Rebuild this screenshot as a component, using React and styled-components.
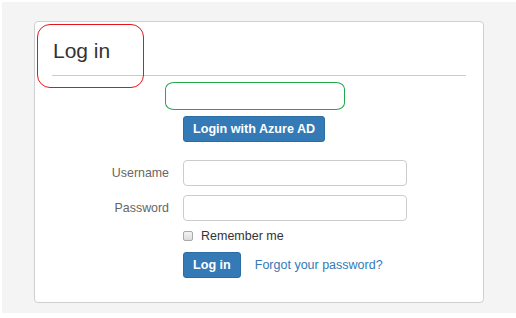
import React from "react";
import styled, { createGlobalStyle } from "styled-components";

const GlobalStyle = createGlobalStyle`
    body {
        margin: 0;
        background: #fff;
        font-family: "Liberation Sans", Arial, sans-serif;
        font-size: 12.5px;
        color: #333;
    }
    * { box-sizing: border-box; }
`;

const Screen = styled.section`
    margin: 2px 0 0 2px;
    height: 311px;
    background-color: #f4f4f4;
    padding: 19px 0 0 32px;
`;

const Card = styled.div`
    position: relative;
    width: 450px;
    height: 282px;
    background: #fff;
    border: 1px solid #cfcfcf;
    border-radius: 4px;
`;

const Header = styled.div`
    margin: 0 17px;
    padding: 17px 0 12px 1px;
    border-bottom: 1px solid #cccccc;
`;

const Title = styled.h2`
    margin: 0;
    font-weight: 400;
    font-size: 21px;
    line-height: 24px;
    color: #333;
`;

const Form = styled.div`
    display: flex;
    flex-direction: column;
`;

const Row = styled.div`
    display: grid;
    grid-template-columns: 134px 224px;
    column-gap: 14px;
    align-items: center;
    margin-top: ${(p) => p.$gap}px;
`;

const Label = styled.label`
    text-align: right;
    color: #666;
    font-size: 12.4px;
`;

const Input = styled.input`
    display: block;
    width: 224px;
    height: 26px;
    border: 1px solid #cccccc;
    border-radius: 4px;
    background: #fff;
    font: inherit;
`;

const Button = styled.button`
    justify-self: start;
    height: 26px;
    padding: 0 ${(p) => p.$pad}px;
    background: #337ab7;
    border: 1px solid #2e6da4;
    border-radius: 3px;
    color: #fff;
    font-family: "Liberation Sans", Arial, sans-serif;
    font-weight: 700;
    font-size: 12.6px;
`;

const Check = styled.label`
    display: flex;
    align-items: center;
    gap: 8px;
    line-height: 16px;
    color: #333;
`;

const Box = styled.span`
    width: 10px;
    height: 10px;
    border: 1px solid #a9a9a9;
    border-radius: 2px;
    background: linear-gradient(#f4f4f4, #dcdcdc);
`;

const Actions = styled.div`
    display: flex;
    align-items: center;
    gap: 14px;
`;

const Link = styled.a`
    color: #337ab7;
    text-decoration: none;
`;

const Mark = styled.div`
    position: absolute;
    border: 1px solid ${(p) => p.$color};
    border-radius: ${(p) => p.$radius};
    pointer-events: none;
`;

const RedMark = styled(Mark)`
    left: 2px;
    top: 2px;
    width: 107px;
    height: 64px;
`;

const GreenMark = styled(Mark)`
    left: 130px;
    top: 60px;
    width: 180px;
    height: 28px;
`;

export default function App() {
    return (
        <>
            <GlobalStyle />
            <Screen>
                <Card>
                    <Header>
                        <Title>Log in</Title>
                    </Header>
                    <Form>
                        <Row $gap={40}>
                            <span />
                            <Button $pad={9}>Login with Azure AD</Button>
                        </Row>
                        <Row $gap={18}>
                            <Label>Username</Label>
                            <Input type="text" />
                        </Row>
                        <Row $gap={9}>
                            <Label>Password</Label>
                            <Input type="password" />
                        </Row>
                        <Row $gap={7}>
                            <span />
                            <Check>
                                <Box />
                                Remember me
                            </Check>
                        </Row>
                        <Row $gap={8}>
                            <span />
                            <Actions>
                                <Button $pad={9}>Log in</Button>
                                <Link href="#">Forgot your password?</Link>
                            </Actions>
                        </Row>
                    </Form>
                    <RedMark $color="#e3151a" $radius="13px" />
                    <GreenMark $color="#23a84a" $radius="9px / 7px" />
                </Card>
            </Screen>
        </>
    );
}
